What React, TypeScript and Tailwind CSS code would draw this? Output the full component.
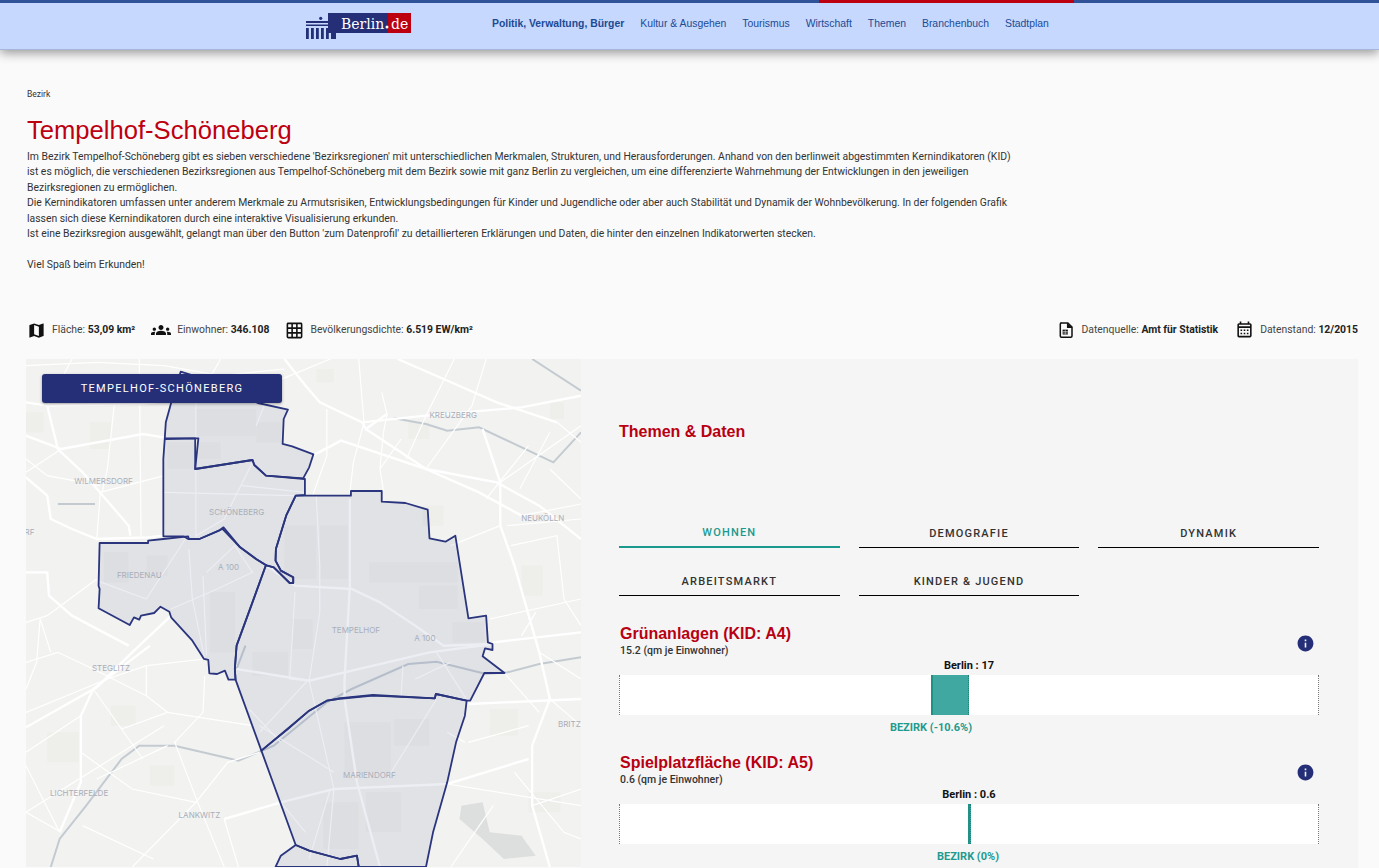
import { MdMap, MdGroups, MdGridOn, MdOutlineCalendarMonth, MdInfo } from "react-icons/md";

// Map geometry is traced from the reference, x scaled 2.825 and y scaled 3
const majorRoads = [
  "M0 355 60 410 70 480 130 510 200 540 345 535 390 530",
  "M730 0 790 80 830 130 950 190 960 210 1020 165",
  "M950 190 1130 170 1400 145 1568 110",
  "M810 290 890 245 1130 330 1330 370 1450 440 1568 540",
  "M960 210 1130 330 1280 400 1400 470",
  "M1050 0 1180 60 1330 130 1500 190",
  "M1290 210 1340 370 1340 500 1380 620 1450 880 1480 1020 1430 1160 1430 1340 1480 1524",
  "M0 640 60 640 65 710 130 770 290 860",
  "M410 770 300 880 200 985 0 1105",
  "M350 860 190 990 155 1070 155 1270 95 1420",
  "M1250 1035 1568 1020",
  "M1320 850 1568 820",
  "M915 420 915 680 900 960 900 1020 935 1270 1000 1524",
  "M680 620 760 680 920 690 1000 730 1100 800 1180 860 1320 855",
  "M0 130 60 140 320 135 410 125",
  "M60 140 90 270 160 340 290 500 295 530",
  "M0 230 100 270 330 225 390 235",
  "M560 1380 720 1330 870 1290 1190 1275 1420 1200",
  "M595 930 800 965 1140 880 1320 855",
];

const minorRoads = [
  "M1210 0 1130 170 1075 300",
  "M1005 100 1020 165 1010 220 1000 330 1010 395",
  "M940 0 955 190 925 310 915 400",
  "M320 0 325 530",
  "M340 920 340 1010 400 1060 640 1100",
  "M0 910 90 880 190 930 340 1010",
  "M505 900 340 920",
  "M505 950 500 1060 420 1150 485 1330 560 1524",
  "M660 1180 570 1210 480 1330 300 1524",
  "M1310 780 1568 720",
  "M1400 470 1568 435",
  "M100 270 0 340",
  "M130 0 60 140",
  "M200 540 210 400 390 350",
  "M0 790 60 770 200 660",
  "M40 780 30 910 0 990",
  "M190 990 270 1110 330 1200",
  "M155 1070 0 1180",
  "M270 1110 400 1060",
  "M1340 370 1568 200",
  "M1480 220 1395 390",
  "M1300 0 1260 140 1130 330",
  "M860 0 700 70 650 200",
  "M480 130 480 540 450 540 340 720 200 665",
  "M640 310 560 480 480 530",
  "M610 380 790 400",
  "M390 400 760 410",
  "M820 410 830 620 830 760 800 965 870 1290 850 1524",
  "M760 700 745 960 800 965",
  "M460 570 470 720 505 900",
  "M500 650 510 890",
  "M510 640 590 560 640 640 540 690 410 750",
  "M1065 920 1060 1010",
  "M1160 880 1250 1030",
  "M660 1120 800 960",
  "M660 1100 870 1240",
  "M1160 1020 1020 1260",
  "M390 1100 0 1360 100 1420",
  "M1190 1275 1568 1340",
  "M1480 1020 1568 1100",
  "M1350 940 1450 1060",
  "M800 1500 860 1290",
  "M1360 500 1568 480",
  "M1440 760 1400 830",
  "M1500 190 1568 250",
  "M1320 1340 1200 1524",
  "M160 1400 360 1500",
  "M0 1220 95 1420",
  "M250 130 230 330 215 400",
  "M0 300 60 350 210 380",
  "M390 20 550 50 730 30",
  "M0 20 200 10 390 20",
  "M550 0 480 130",
  "M850 150 850 290 810 410",
  "M1060 240 1000 330",
  "M1480 330 1568 420",
  "M1420 260 1300 420",
  "M1200 560 1340 500",
  "M1370 560 1500 530 1520 720 1568 800",
  "M1450 880 1568 960",
  "M1250 1150 1420 1100",
  "M1190 1120 1240 1150",
  "M70 880 40 780",
  "M340 920 230 960 0 1060",
  "M200 1260 400 1160",
  "M155 1180 300 1290 480 1330",
  "M560 1380 600 1524",
  "M720 1330 790 1420",
  "M630 1050 720 1150",
  "M1100 960 1200 910",
  "M1380 1240 1520 1420 1568 1440",
  "M1430 1340 1568 1290",
];

const waterways = [
  "M1568 895 1450 915 1360 940 1300 945 1160 908 1080 915 920 990 850 1030 700 1160 600 1205 560 1195 420 1160 320 1160 270 1200 170 1340 95 1440 70 1524",
  "M1040 178 1130 195 1190 215 1280 205 1490 310 1568 220",
  "M1430 0 1568 95",
  "M90 435 195 435",
  "M620 860 595 930",
];

const blocks = [
  [970, 610, 250, 60], [1110, 680, 110, 70], [480, 150, 170, 80], [650, 190, 70, 60], [400, 250, 75, 80],
  [490, 250, 60, 50], [730, 500, 90, 160], [830, 500, 80, 160], [520, 700, 70, 180], [220, 580, 70, 90],
  [640, 880, 100, 70], [750, 780, 60, 90], [1205, 790, 90, 60], [900, 1090, 130, 150], [840, 1330, 100, 140],
  [1040, 1080, 100, 80], [960, 1300, 100, 120], [340, 590, 60, 60], [60, 1120, 90, 90], [240, 1040, 70, 60],
  [1420, 1300, 90, 60], [1120, 440, 60, 60], [180, 190, 60, 80], [1400, 620, 60, 90], [1080, 190, 60, 50],
  [820, 30, 50, 40], [1480, 130, 40, 50], [0, 160, 50, 60], [350, 1220, 70, 60], [1310, 1050, 80, 80],
];

const districts = [
  "M437 38 462 46 655 132 740 152 728 180 725 255 752 262 812 286 800 325 783 358 678 350 645 318 640 303 478 330 487 238 392 238 395 190 410 132Z",
  "M392 240 478 238 478 330 640 303 645 318 678 350 788 360 788 408 762 410 735 470 706 570 705 605 720 635 755 655 755 672 745 672 700 625 680 620 650 600 605 565 558 505 545 515 490 540 458 540 445 532 388 532 388 300Z",
  "M208 552 345 552 345 545 388 540 458 532 460 540 490 540 555 510 605 565 650 600 678 618 640 730 595 860 590 930 592 962 572 962 562 935 540 945 518 943 515 903 503 900 470 845 410 775 405 758 380 743 362 762 325 770 320 782 305 775 293 798 205 748 208 690 205 680Z",
  "M762 410 918 410 918 396 1005 396 1005 428 1072 432 1135 452 1140 538 1185 548 1213 530 1250 778 1300 770 1305 850 1318 855 1318 873 1297 868 1290 892 1352 942 1295 942 1255 1025 1245 1025 1158 1005 1155 1018 980 1010 880 1020 850 1025 800 1055 665 1175 592 962 590 930 595 860 678 618 700 625 745 672 755 672 755 655 720 635 705 605 706 570 735 470Z",
  "M665 1175 740 1110 800 1055 850 1025 880 1020 882 1018 980 1008 1155 1018 1158 1005 1245 1025 1240 1070 1215 1150 1190 1270 1150 1420 1130 1524 940 1524 935 1490 888 1500 800 1475 762 1458Z",
  "M762 1458 800 1475 888 1500 935 1490 940 1524 705 1524 720 1490Z",
];

const mapLabels: [string, number, number][] = [
  ["KREUZBERG", 1207, 168],
  ["WILMERSDORF", 219, 366],
  ["NEUKÖLLN", 1460, 478],
  ["SCHÖNEBERG", 595, 459],
  ["FRIEDENAU", 320, 649],
  ["A 100", 572, 623],
  ["TEMPELHOF", 932, 813],
  ["A 100", 1127, 837],
  ["STEGLITZ", 240, 927],
  ["BRITZ", 1535, 1095],
  ["MARIENDORF", 970, 1249],
  ["LICHTERFELDE", 150, 1302],
  ["LANKWITZ", 490, 1369],
  ["RF", 10, 520],
];

const navItems = ["Kultur & Ausgehen", "Tourismus", "Wirtschaft", "Themen", "Branchenbuch", "Stadtplan"];

function Logo() {
  return (
    <svg width="105" height="26" viewBox="0 0 105 26" className="shrink-0">
      <rect x="22" y="0" width="60" height="20" fill="#252f78" />
      <rect x="82" y="0" width="23" height="20" fill="#bd0010" />
      <circle cx="14.7" cy="5.3" r="1.6" fill="#252f78" />
      <rect x="0" y="8" width="22" height="2" fill="#252f78" />
      <rect x="0" y="11.500" width="22" height="1.500" fill="#252f78" />
      {[0, 5, 10, 15, 20, 25].map((x) => (
        <rect key={x} x={x} y="15" width="2.800" height="11" fill="#252f78" />
      ))}
      <rect x="27" y="20" width="3" height="6" fill="#252f78" />
      <text x="35" y="15.500" fontFamily="'DejaVu Serif', serif" fontSize="14" fill="#fff">
        Berlin
      </text>
      <circle cx="81" cy="14" r="1.500" fill="#fff" />
      <text x="85" y="15.500" fontFamily="'DejaVu Serif', serif" fontSize="14" fill="#fff">
        de
      </text>
    </svg>
  );
}

function Header() {
  return (
    <header className="relative z-10 h-[50px] bg-[#c6d8fd] border-b border-[#a5b6d8] shadow-[0_3px_10px_rgba(0,0,0,0.4)]">
      <div className="flex h-[3px]">
        <div className="w-[819px] bg-[#2f5299]" />
        <div className="w-[255px] bg-[#bd0010]" />
        <div className="flex-1 bg-[#2f5299]" />
      </div>
      <div className="flex pl-[306px] pt-[10px]">
        <Logo />
        <nav className="ml-[81px] flex gap-[16px] pt-[4px] font-['Liberation_Sans',Arial,sans-serif] text-[10.4px] leading-[13px] text-[#1c4a94]">
          <span className="font-bold">Politik, Verwaltung, Bürger</span>
          {navItems.map((item) => (
            <span key={item}>{item}</span>
          ))}
        </nav>
      </div>
    </header>
  );
}

function FileTableIcon() {
  return (
    <svg width="18" height="18" viewBox="0 0 24 24">
      <path d="M6 2.500h8.500L20 8v12a1.600 1.600 0 0 1-1.600 1.600H6A1.600 1.600 0 0 1 4.400 20V4A1.600 1.600 0 0 1 6 2.500z" fill="none" stroke="#111" strokeWidth="2" />
      <path d="M14 3v5.500h6" fill="#111" stroke="#111" strokeWidth="1.500" />
      <path d="M7.500 11.500h7v6.500h-7z" fill="#111" />
      <path d="M7.500 14h7M7.500 16h7M11 11.500V18" stroke="#fff" strokeWidth="0.700" />
    </svg>
  );
}

function Stat({ icon, label, value }: { icon: React.ReactNode; label: string; value: string }) {
  return (
    <div className="flex items-center gap-[6px]">
      {icon}
      <span className="text-[#444]">
        {label} <b className="font-bold text-[#222]">{value}</b>
      </span>
    </div>
  );
}

function BerlinMap() {
  return (
    <div className="relative h-[508px] w-[555px] shrink-0 overflow-hidden bg-[#f2f2f0]">
      <svg width="555" height="508" viewBox="0 0 555 508" className="block">
        <g transform="scale(0.35395 0.33333)">
          {blocks.map(([x, y, w, h], i) => (
            <rect key={i} x={x} y={y} width={w} height={h} fill="#eeeeeb" />
          ))}
          <path d="M1230 1340 1290 1330 1310 1420 1400 1430 1440 1490 1350 1500 1290 1440 1225 1380Z" fill="#dcdfdd" />
          {waterways.map((d) => (
            <path key={d} d={d} fill="none" stroke="#c3cbd1" strokeWidth="2" vectorEffect="non-scaling-stroke" />
          ))}
          {minorRoads.map((d) => (
            <path key={d} d={d} fill="none" stroke="#fff" strokeWidth="1.200" vectorEffect="non-scaling-stroke" />
          ))}
          {majorRoads.map((d) => (
            <path key={d} d={d} fill="none" stroke="#fff" strokeWidth="2.400" vectorEffect="non-scaling-stroke" />
          ))}
          {districts.map((d) => (
            <path key={d} d={d} fill="#2a4080" fillOpacity="0.09" stroke="#2a357e" strokeWidth="1.800" strokeLinejoin="round" vectorEffect="non-scaling-stroke" />
          ))}
        </g>
        {mapLabels.map(([name, x, y], i) => (
          <text
            key={i}
            x={x * 0.35395}
            y={y * 0.33333 + 3}
            textAnchor="middle"
            fontFamily="Inter, sans-serif"
            fontSize="8"
            fill="#a9aeba"
          >
            {name}
          </text>
        ))}
      </svg>
      <div className="absolute left-[16px] top-[15px] flex h-[29px] w-[240px] items-center justify-center rounded-[3px] bg-[#252f78] text-[11px] font-normal tracking-[1.3px] text-white shadow-[0_1px_3px_rgba(0,0,0,0.35)]">
        TEMPELHOF-SCHÖNEBERG
      </div>
    </div>
  );
}

function Tab({ label, active }: { label: string; active?: boolean }) {
  return (
    <div
      className={`flex h-[48px] items-end justify-center text-[11px] font-medium tracking-[1.2px] ${
        active ? "border-b-[2px] border-[#1a9a8e] pb-[5px] text-[#1a9a8e]" : "border-b border-black pb-[5px] text-[#333]"
      }`}
    >
      {label}
    </div>
  );
}

interface IndicatorProps {
  title: string;
  sub: string;
  berlin: string;
  delta: string;
  barLeft: number;
  barWidth: number;
  labelLeft: number;
}

function Indicator({ title, sub, berlin, delta, barLeft, barWidth, labelLeft }: IndicatorProps) {
  return (
    <div className="mb-[15px]">
      <div className="relative pl-[1px]">
        <h3 className="font-['Liberation_Sans',Arial,sans-serif] text-[16px] leading-[18px] font-bold text-[#b80012]">{title}</h3>
        <p className="text-[10.5px] leading-[15px] font-medium text-[#333]">{sub}</p>
        <MdInfo className="absolute right-[4px] top-[9px] text-[#252f78]" size={19} />
      </div>
      <div className="h-[17px] text-center text-[11px] leading-[16px] font-bold text-[#111]">{berlin}</div>
      <div className="relative h-[40px] border-x border-dotted border-x-[#777] bg-white">
        <div
          className="absolute top-0 h-full border-l-2 border-r border-l-[#1f9185] border-r-[#1a7f75] border-dotted bg-[#40a8a0] [border-left-style:solid]"
          style={{ left: barLeft, width: barWidth }}
        />
      </div>
      <div className="relative h-[24px]">
        <span
          className="absolute top-[6px] -translate-x-1/2 whitespace-nowrap text-[11px] leading-[14px] font-bold text-[#1f9a8e]"
          style={{ left: labelLeft }}
        >
          {delta}
        </span>
      </div>
    </div>
  );
}

export default function App() {
  return (
    <div className="h-[868px] w-full overflow-hidden bg-[#fafafa] font-[Roboto,sans-serif]">
      <Header />

      {/* Intro */}
      <div className="pl-[27px] pt-[39px]">
        <div className="text-[8.5px] leading-[11px] text-[#333]">Bezirk</div>
        <h1 className="mt-[15px] font-['Liberation_Sans',Arial,sans-serif] text-[25.6px] leading-[30px] text-[#bd0010]">
          Tempelhof-Schöneberg
        </h1>
        <p className="mt-[4px] w-[990px] text-[10.4px] leading-[15.4px] text-[#333]">
          Im Bezirk Tempelhof-Schöneberg gibt es sieben verschiedene 'Bezirksregionen' mit unterschiedlichen Merkmalen, Strukturen, und Herausforderungen. Anhand von den berlinweit abgestimmten Kernindikatoren (KID) ist es möglich, die verschiedenen Bezirksregionen aus Tempelhof-Schöneberg mit dem Bezirk sowie mit ganz Berlin zu vergleichen, um eine differenzierte Wahrnehmung der Entwicklungen in den jeweiligen Bezirksregionen zu ermöglichen.
          <br />
          Die Kernindikatoren umfassen unter anderem Merkmale zu Armutsrisiken, Entwicklungsbedingungen für Kinder und Jugendliche oder aber auch Stabilität und Dynamik der Wohnbevölkerung. In der folgenden Grafik lassen sich diese Kernindikatoren durch eine interaktive Visualisierung erkunden.
          <br />
          Ist eine Bezirksregion ausgewählt, gelangt man über den Button 'zum Datenprofil' zu detaillierteren Erklärungen und Daten, die hinter den einzelnen Indikatorwerten stecken.
          <br />
          <br />
          Viel Spaß beim Erkunden!
        </p>
      </div>

      {/* Stats */}
      <div className="mt-[48px] flex h-[39px] items-start justify-between pl-[27px] pr-[21px] text-[10.4px] leading-[18px]">
        <div className="flex gap-[16px]">
          <Stat icon={<MdMap size={19} color="#111" />} label="Fläche:" value="53,09 km²" />
          <Stat icon={<MdGroups size={20} color="#111" />} label="Einwohner:" value="346.108" />
          <Stat icon={<MdGridOn size={19} color="#111" />} label="Bevölkerungsdichte:" value="6.519 EW/km²" />
        </div>
        <div className="flex gap-[17px]">
          <Stat icon={<FileTableIcon />} label="Datenquelle:" value="Amt für Statistik" />
          <Stat icon={<MdOutlineCalendarMonth size={19} color="#111" />} label="Datenstand:" value="12/2015" />
        </div>
      </div>

      {/* Map and data panel */}
      <div className="ml-[26px] mr-[21px] flex">
        <BerlinMap />
        <div className="flex-1 bg-[#f5f5f5] pl-[38px] pr-[39px] pt-[63px]">
          <h2 className="font-['Liberation_Sans',Arial,sans-serif] text-[16px] leading-[20px] font-bold text-[#b80012]">Themen & Daten</h2>
          <div className="mt-[58px] grid grid-cols-3 gap-x-[19px]">
            <Tab label="WOHNEN" active />
            <Tab label="DEMOGRAFIE" />
            <Tab label="DYNAMIK" />
            <Tab label="ARBEITSMARKT" />
            <Tab label="KINDER & JUGEND" />
          </div>
          <div className="mt-[29px]">
            <Indicator
              title="Grünanlagen (KID: A4)"
              sub="15.2 (qm je Einwohner)"
              berlin="Berlin : 17"
              delta="BEZIRK (-10.6%)"
              barLeft={311}
              barWidth={38}
              labelLeft={312}
            />
            <Indicator
              title="Spielplatzfläche (KID: A5)"
              sub="0.6 (qm je Einwohner)"
              berlin="Berlin : 0.6"
              delta="BEZIRK (0%)"
              barLeft={348}
              barWidth={2}
              labelLeft={349}
            />
          </div>
        </div>
      </div>
    </div>
  );
}
